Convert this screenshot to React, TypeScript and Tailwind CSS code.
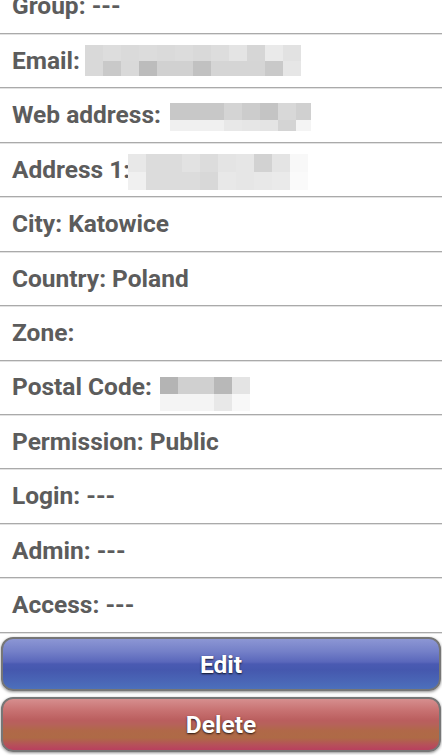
import React from "react";

type Mosaic = {
  left: number;
  top: number;
  widths: number[];
  heights: [number, number];
  top_row: string[];
  bottom_row: string[];
};

const rows: { label: string; mosaic?: Mosaic }[] = [
  { label: "Group: ---" },
  {
    label: "Email:",
    mosaic: {
      left: 85,
      top: 11,
      widths: [18, 18, 18, 18, 18, 18, 18, 18, 18, 18, 18, 18],
      heights: [16, 15],
      top_row: ["#d9d9d9", "#dddddd", "#dadada", "#dcdcdc", "#dadada", "#dcdcdc", "#d9d9d9", "#dddddd", "#e4e4e4", "#d6d6d6", "#eaeaea", "#e2e2e2"],
      bottom_row: ["#d9d9d9", "#c9c9c9", "#d9d9d9", "#bcbcbc", "#d1d1d1", "#d1d1d1", "#c1c1c1", "#d5d5d5", "#d5d5d5", "#d5d5d5", "#c9c9c9", "#e6e6e6"],
    },
  },
  {
    label: "Web address: ",
    mosaic: {
      left: 170,
      top: 15,
      widths: [54, 18, 18, 18, 18, 15],
      heights: [17, 11],
      top_row: ["#c8c8c8", "#d4d4d4", "#cccccc", "#c4c4c4", "#d8d8d8", "#d0d0d0"],
      bottom_row: ["#f0f0f0", "#e8e8e8", "#e6e6e6", "#e4e4e4", "#d4d4d4", "#f4f4f4"],
    },
  },
  {
    label: "Address 1:",
    mosaic: {
      left: 128,
      top: 11,
      widths: [18, 18, 18, 18, 18, 18, 18, 18, 18, 18],
      heights: [18, 18],
      top_row: ["#e8e8e8", "#dcdcdc", "#dcdcdc", "#e2e2e2", "#dcdcdc", "#e4e4e4", "#e6e6e6", "#d2d2d2", "#e4e4e4", "#f8f8f8"],
      bottom_row: ["#f0f0f0", "#dcdcdc", "#dcdcdc", "#dcdcdc", "#d8d8d8", "#e8e8e8", "#e6e6e6", "#e8e8e8", "#eaeaea", "#fafafa"],
    },
  },
  { label: "City: Katowice" },
  { label: "Country: Poland" },
  { label: "Zone:" },
  {
    label: "Postal Code:",
    mosaic: {
      left: 160,
      top: 16,
      widths: [18, 18, 18, 18, 18],
      heights: [17, 17],
      top_row: ["#b4b4b4", "#d0d0d0", "#d0d0d0", "#b8b8b8", "#e4e4e4"],
      bottom_row: ["#f4f4f4", "#f4f4f4", "#f4f4f4", "#e8e8e8", "#f8f8f8"],
    },
  },
  { label: "Permission: Public" },
  { label: "Login: ---" },
  { label: "Admin: ---" },
  { label: "Access: ---" },
];

const Pixelated = ({ m }: { m: Mosaic }) => (
  <div className="absolute flex flex-col" style={{ left: m.left, top: m.top }}>
    {[m.top_row, m.bottom_row].map((line, r) => (
      <div key={r} className="flex">
        {line.map((c, i) => (
          <div key={i} style={{ width: m.widths[i], height: m.heights[r], background: c }} />
        ))}
      </div>
    ))}
  </div>
);

export default function App() {
  return (
    <div className="w-[442px] h-[755px] overflow-hidden bg-white font-['Roboto',sans-serif]">
      <ul className="-mt-[20.5px]">
        {rows.map((row) => (
          <li
            key={row.label}
            className="relative h-[54.45px] flex items-center pl-3 pt-[1px] border-b border-[#aaaaaa] shadow-[0_1px_0_#e2e2e2] text-[24.5px] font-bold text-[#5c5c5c] whitespace-pre"
          >
            {row.label}
            {row.mosaic && <Pixelated m={row.mosaic} />}
          </li>
        ))}
      </ul>

      <div className="flex flex-col gap-[6px] pt-[4px] px-[1px]">
        <button className="h-[54px] pt-[3px] rounded-[12px] border-2 border-[#767676] shadow-[0_1px_3px_rgba(0,0,0,0.45)] bg-[linear-gradient(#8c96d4_0%,#7480c8_25%,#5a67bb_46%,#4a5ab2_50%,#4558ae_62%,#4a66b6_85%,#4c70bc_100%)] text-white text-[24.5px] font-bold [text-shadow:0_1px_2px_rgba(0,0,0,0.8)]">
          Edit
        </button>
        <button className="h-[55px] pt-[3px] rounded-[12px] border-2 border-[#767676] shadow-[0_1px_3px_rgba(0,0,0,0.45)] bg-[linear-gradient(#d68e8e_0%,#c87272_22%,#ba5e5e_42%,#b6625a_50%,#b06848_62%,#ae6a46_76%,#b6505a_90%,#b8405e_100%)] text-white text-[24.5px] font-bold [text-shadow:0_1px_2px_rgba(0,0,0,0.8)]">
          Delete
        </button>
      </div>
    </div>
  );
}
